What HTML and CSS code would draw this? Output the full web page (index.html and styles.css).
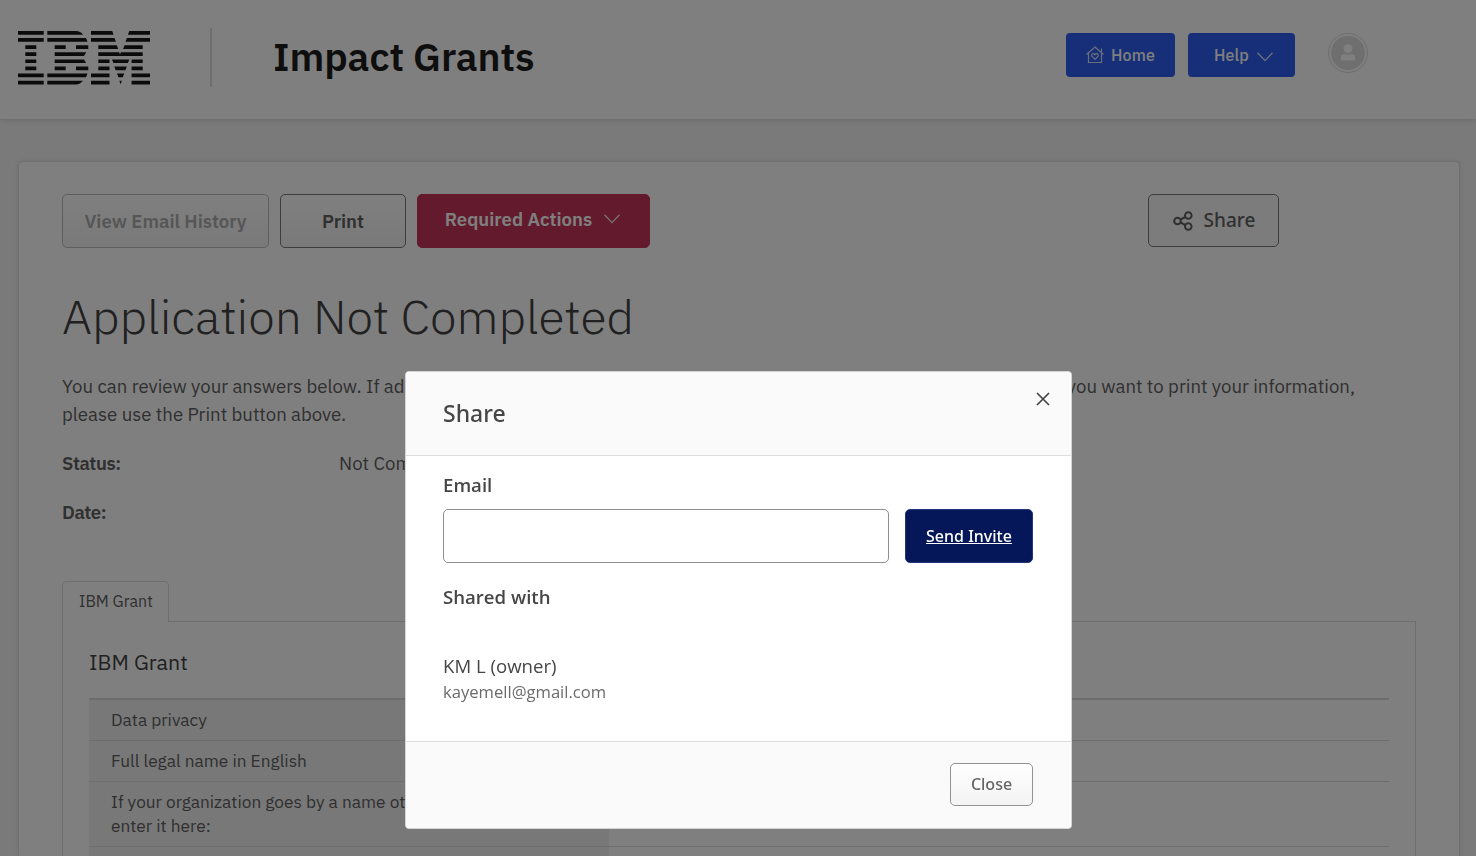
FILE: index.html
```html
<!DOCTYPE html>
<html lang="en">
<head>
<meta charset="utf-8">
<title>Impact Grants</title>
<link rel="stylesheet" href="styles.css">
</head>
<body>
<header class="site-header">
  <svg class="logo" viewBox="0 0 132 54" role="img" aria-label="IBM">
    <path d="M0 0h25.7v3.700H0zM0 7.100h25.7v3.700H0zM7.300 14.200h11v3.700h-11zM7.300 21.300h11v3.700h-11zM7.300 28.400h11v3.700h-11zM7.300 35.500h11v3.700h-11zM0 42.600h25.7v3.700H0zM0 49.700h25.7v3.700H0z"/>
    <path d="M29.300 0H58q4.500 0 7 3.700H29.300zM29.300 7.100H68l1.500 3.700H29.300zM36.700 14.200h11v3.700h-11zM58 14.200h12.300v3.700H58zM36.700 21.300h31.500l-2.200 3.700H36.700zM36.700 28.400H66l2.200 3.700H36.700zM36.700 35.500h11v3.700h-11zM58 35.500h12.300v3.700H58zM29.300 42.600h40.200l-1.500 3.700H29.300zM29.300 49.700H65q-3 3.700-7 3.700H29.300z"/>
    <path d="M73 0h21.200l1.400 3.700H73zM73 7.100h23.500l1.400 3.700H73zM80.300 14.200h18.500l1.400 3.700H80.300zM80.300 21.300h20.900l.8 2.500.8-2.500h21.900V25H80.300zM80.300 28.400h11.200v3.700H80.300zM94 28.400h17.300l-1.400 3.700H95.400zM113.600 28.400h11.100v3.700h-11.100zM80.300 35.500h11.200v3.700H80.300zM96.300 35.500h12.500l-1.400 3.700h-9.700zM113.600 35.500h11.100v3.700h-11.100zM73 42.600h18.500v3.700H73zM99 42.600h7.200l-1.400 3.700h-4.400zM113.600 42.600H132v3.700h-18.400zM73 49.700h18.500v3.700H73zM101.300 49.700h2.500l-1.200 3.500zM113.600 49.700H132v3.700h-18.400zM111.300 0H132v3.700h-22.100zM108.900 7.100H132v3.700h-24.500zM106.500 14.200h18.200v3.700h-19.600z"/>
  </svg>
  <span class="divider"></span>
  <span class="site-title">Impact Grants</span>
  <nav class="site-nav">
    <a class="nav-btn nav-home"><svg class="home-icon" viewBox="0 0 18 18"><path d="M.5 8.500L9 1l8.500 7.500M2.500 7v9.500h13V7M15.500 7V2.500"/><path d="M9 13.300L5.900 10.200q-.8-1.500.5-2.400 1.500-.7 2.600.9 1.100-1.600 2.600-.9 1.300.9.500 2.400z"/></svg><span>Home</span></a>
    <a class="nav-btn nav-help"><span>Help</span><svg class="chevron" viewBox="0 0 16 10"><path d="M.5.8L8 8.600 15.500.8"/></svg></a>
    <span class="avatar"><svg viewBox="0 0 34 34"><circle cx="17" cy="12.500" r="4.400"/><path d="M9.800 24.500v-2.300q0-4 4-4 3.200 1.200 6.400 0 4 0 4 4v2.300z"/></svg></span>
  </nav>
</header>
<main class="card">
  <div class="toolbar">
    <button class="btn btn-history" disabled>View Email History</button>
    <button class="btn btn-print">Print</button>
    <button class="btn btn-required"><span>Required Actions</span><svg class="chevron" viewBox="0 0 16 10"><path d="M.5.8L8 8.600 15.500.8"/></svg></button>
    <button class="btn btn-share"><svg class="share-icon" viewBox="0 0 20 20"><circle cx="4.500" cy="10" r="3.300"/><circle cx="15.300" cy="4.500" r="3.300"/><circle cx="15.300" cy="15.500" r="3.300"/><path d="M7.400 8.500l5-2.500M7.400 11.500l5 2.500"/></svg><span>Share</span></button>
  </div>
  <h1 class="page-title">Application Not Completed</h1>
  <div class="intro">
    <div class="intro-line"><span>You can review your answers below. If additional information is needed, we will contact you.</span><span class="intro-end">If you want to print your information,</span></div>
    <div>please use the Print button above.</div>
  </div>
  <dl class="facts">
    <dt>Status:</dt><dd>Not Completed</dd>
    <dt>Date:</dt><dd></dd>
  </dl>
  <div class="tab">IBM Grant</div>
  <section class="panel">
    <h2 class="panel-title">IBM Grant</h2>
    <div class="answers">
      <div class="answer"><div class="question">Data privacy</div></div>
      <div class="answer"><div class="question">Full legal name in English</div></div>
      <div class="answer"><div class="question">If your organization goes by a name other than its legal name,<br>enter it here:</div></div>
      <div class="answer"><div class="question">&nbsp;</div></div>
    </div>
  </section>
</main>
<div class="overlay">
  <div class="modal" role="dialog" aria-label="Share">
    <div class="modal-head"><span class="modal-title">Share</span><svg class="close-icon" viewBox="0 0 14 14"><path d="M1 1l12 12M13 1L1 13"/></svg></div>
    <div class="modal-body">
      <label class="field-label" for="email">Email</label>
      <div class="invite-row"><input class="email-input" id="email" type="text"><a class="send">Send Invite</a></div>
      <div class="field-label shared">Shared with</div>
      <div class="owner">KM L (owner)</div>
      <div class="owner-mail">kayemell@gmail.com</div>
    </div>
    <div class="modal-foot"><button class="close-btn">Close</button></div>
  </div>
</div>
</body>
</html>
```
FILE: styles.css
```css
* { box-sizing: border-box; }
body {
  margin: 0;
  height: 856px;
  overflow: hidden;
  background: #f4f4f4;
  color: #606060;
  font-family: "IBM Plex Sans", Roboto, sans-serif;
}
svg { display: block; flex: none; fill: none; stroke: currentColor; }
button { margin: 0; font-family: inherit; }

.site-header {
  display: flex;
  height: 119px;
  padding-left: 18px;
  background: #fff;
  box-shadow: 0 1px 6px rgba(0, 0, 0, .14);
}
.logo { width: 132px; height: 54px; margin-top: 31px; fill: #161616; stroke: none; }
.divider { width: 2px; height: 59px; margin: 28px 0 0 60px; background: #dedede; }
.site-title {
  margin: 31px 0 0 61px;
  color: #1c1c1c;
  font-size: 39.2px;
  line-height: 52px;
  font-weight: 600;
  letter-spacing: -.1px;
  white-space: nowrap;
}
.site-nav { display: flex; margin: 33px 108px 0 auto; }
.nav-btn {
  display: flex;
  align-items: center;
  height: 44px;
  border-radius: 4px;
  background: #2e5ff2;
  color: #fff;
  font-size: 16px;
  font-weight: 500;
  letter-spacing: .15px;
}
.nav-home { width: 109px; padding-left: 20px; gap: 7px; margin-right: 13px; }
.nav-help { width: 107px; padding-left: 26px; gap: 8px; margin-right: 33px; }
.home-icon { width: 18px; height: 18px; stroke-width: 1.2; opacity: .8; }
.chevron { width: 16px; height: 10px; stroke-width: 1.3; opacity: .85; }
.nav-help .chevron { margin-top: 4px; }
.avatar {
  display: flex;
  align-items: center;
  justify-content: center;
  width: 40px;
  height: 40px;
  border: 1px solid #dcdcdc;
  border-radius: 50%;
}
.avatar svg { width: 34px; height: 34px; border-radius: 50%; background: #dedede; fill: #fff; stroke: none; }

.card {
  height: 695px;
  margin: 42px 16px 0 18px;
  padding: 32px 43px 0;
  border: 1px solid #e0e0e0;
  border-bottom: 0;
  border-radius: 5px 5px 0 0;
  background: #fff;
  box-shadow: 0 0 4px rgba(0, 0, 0, .1);
  overflow: hidden;
}
.toolbar { display: flex; height: 54px; }
.btn {
  display: flex;
  align-items: center;
  justify-content: center;
  height: 54px;
  padding: 0;
  border: 1px solid #7a7a7a;
  border-radius: 5px;
  background: linear-gradient(#fff, #f3f3f3);
  color: #606060;
  font-size: 18.600px;
  font-weight: 600;
}
.btn-history { width: 207px; margin-right: 11px; border-color: #bcbcbc; color: #acacac; }
.btn-print { width: 126px; margin-right: 11px; }
.btn-required { width: 233px; gap: 12px; padding: 0 2px 4px 0; border-color: #c63458; background: #c63458; color: #fff; }
.btn-share {
  width: 131px;
  height: 53px;
  margin-left: 498px;
  padding: 0 0 2px 1px;
  gap: 11px;
  background: #f8f8f8;
  font-family: "Noto Sans", sans-serif;
  font-size: 19px;
  font-weight: 500;
}
.share-icon { width: 20px; height: 20px; margin-top: 2px; stroke-width: 2; }
.page-title {
  margin: 37px 0 0;
  color: #424242;
  font-size: 48px;
  line-height: 62px;
  font-weight: 300;
  letter-spacing: -.03px;
  white-space: nowrap;
}
.intro { margin-top: 25px; font-size: 18.600px; line-height: 28px; }
.intro-line { display: flex; justify-content: space-between; width: 1293px; white-space: nowrap; }
.facts {
  display: grid;
  grid-template-columns: 277px 1fr;
  grid-auto-rows: 49px;
  margin: 11px 0 0;
  font-size: 18.600px;
  line-height: 49px;
}
.facts dt { font-weight: 600; letter-spacing: -.4px; }
.facts dd { margin: 0; }
.tab {
  position: relative;
  width: 107px;
  height: 41px;
  margin-top: 44px;
  padding-left: 16px;
  border: 1px solid #dcdcdc;
  border-bottom: 0;
  border-radius: 5px 5px 0 0;
  background: #fff;
  font-size: 16px;
  line-height: 38px;
}
.panel { width: 1354px; height: 320px; margin-top: -1px; padding: 25px 26px 0; border: 1px solid #dcdcdc; }
.panel-title { margin: 0; color: #424242; font-size: 21.400px; line-height: 30px; font-weight: 400; }
.answers { margin-top: 21px; border-top: 2px solid #d8d8d8; }
.answer { display: flex; border-bottom: 1px solid #dcdcdc; }
.question { width: 520px; padding: 8px 0 8px 22px; background: #f0f0f0; font-size: 17.300px; line-height: 24px; white-space: nowrap; overflow: hidden; }

.overlay {
  position: fixed;
  inset: 0;
  display: flex;
  justify-content: center;
  align-items: flex-start;
  padding: 371px 0 0 1px;
  background: rgba(0, 0, 0, .5);
}
.modal {
  width: 667px;
  height: 458px;
  border: 1px solid #d5d5d5;
  border-radius: 4px;
  background: #fff;
  color: #464646;
  font-family: "Open Sans", "Noto Sans", sans-serif;
  overflow: hidden;
}
.modal-head { display: flex; justify-content: space-between; height: 84px; padding: 0 21px 0 37px; border-bottom: 1px solid #dedede; background: #fafafa; }
.modal-title { font-family: "Noto Sans", sans-serif; font-size: 23px; line-height: 82px; font-weight: 500; }
.close-icon { width: 14px; height: 14px; margin-top: 20px; stroke-width: 1.7; }
.modal-body { height: 285px; padding: 16px 37px 0; }
.field-label { display: block; font-size: 18.600px; line-height: 26px; font-weight: 600; }
.invite-row { display: flex; gap: 16px; margin-top: 11px; }
.email-input { width: 446px; height: 54px; border: 1px solid #8f8f8f; border-radius: 5px; background: #fff; }
.send {
  display: flex;
  align-items: center;
  justify-content: center;
  width: 128px;
  height: 54px;
  border: 1px solid #23377c;
  border-radius: 5px;
  background: #051659;
  color: #fff;
  font-family: "Noto Sans", sans-serif;
  font-size: 16px;
  font-weight: 500;
  text-decoration: underline;
}
.shared { margin-top: 21px; }
.owner { margin-top: 43px; font-size: 18.600px; line-height: 26px; }
.owner-mail { color: #6b6b6b; font-size: 16.600px; line-height: 26px; }
.modal-foot { display: flex; justify-content: flex-end; height: 88px; padding: 21px 38px 0; border-top: 1px solid #dedede; background: #fafafa; }
.close-btn { width: 83px; height: 43px; padding: 0 0 2px; border: 1px solid #929292; border-radius: 5px; background: linear-gradient(#fff, #f3f3f3); color: #656565; font-family: "Noto Sans", sans-serif; font-size: 16px; font-weight: 500; }
```
